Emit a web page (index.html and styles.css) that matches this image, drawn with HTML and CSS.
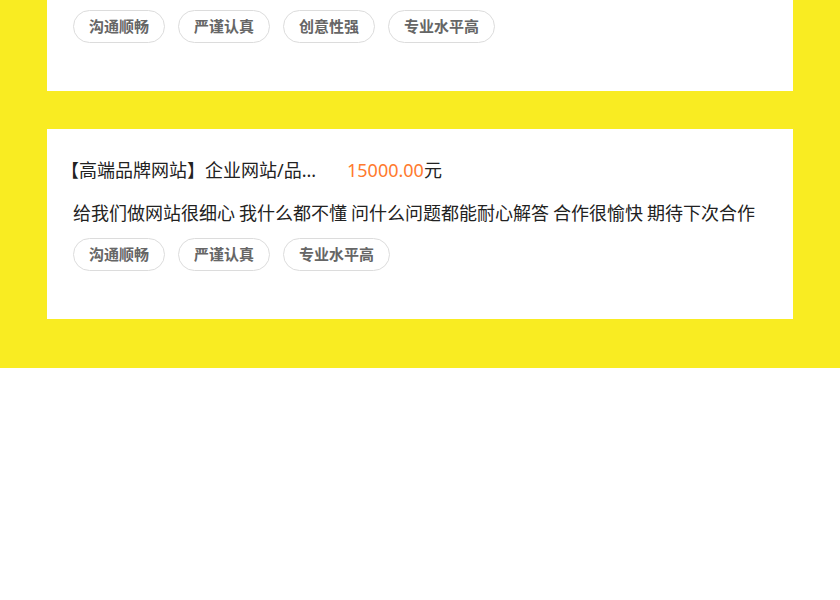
FILE: index.html
```html
<!DOCTYPE html>
<html lang="zh-CN">
<head>
  <meta charset="UTF-8" />
  <meta name="viewport" content="width=device-width, initial-scale=1.0"/>
  <title>客户评价</title>
  <link rel="stylesheet" href="styles.css">
</head>
<body>

  <div class="reviews">
    <div class="card card-cut">
      <div class="tags">
        <span class="tag">沟通顺畅</span>
        <span class="tag">严谨认真</span>
        <span class="tag">创意性强</span>
        <span class="tag">专业水平高</span>
      </div>
    </div>

    <div class="card">
      <div class="card-head">
        <div class="title">【高端品牌网站】企业网站/品...</div>
        <div class="price"><span class="num">15000.00</span>元</div>
      </div>
      <p class="comment">给我们做网站很细心 我什么都不懂 问什么问题都能耐心解答 合作很愉快 期待下次合作</p>
      <div class="tags">
        <span class="tag">沟通顺畅</span>
        <span class="tag">严谨认真</span>
        <span class="tag">专业水平高</span>
      </div>
    </div>
  </div>

</body>
</html>
```

FILE: styles.css
```css
body {
  margin: 0;
  background: #fff;
  font-family: "Noto Sans CJK SC", "Noto Sans", sans-serif;
  color: #222;
}
.reviews {
  background: #f9ec22;
  padding: 0 47px 49px;
  display: flex;
  flex-direction: column;
  gap: 38px;
}
.card {
  background: #fff;
  padding: 29px 20px 48px 26px;
}
.card-cut {
  padding-top: 10px;
}
.card-head {
  display: flex;
  align-items: center;
  height: 24px;
}
.title {
  width: 258px;
  margin-left: -12px;
  font-family: "Noto Sans", "Noto Sans CJK SC", sans-serif;
  font-size: 18px;
  line-height: 24px;
  white-space: nowrap;
}
.price {
  margin-left: 28px;
  font-family: "Noto Sans", "Noto Sans CJK SC", sans-serif;
  font-size: 18px;
  line-height: 24px;
}
.price .num {
  color: #ff7a2e;
}
.comment {
  margin: 18px 0 14px;
  font-size: 18px;
  line-height: 24px;
  color: #222;
}
.tags {
  display: flex;
  gap: 13px;
}
.tag {
  box-sizing: border-box;
  height: 33px;
  border: 1px solid #dcdcdc;
  border-radius: 17px;
  line-height: 29px;
  padding: 0 15px 2px;
  font-size: 15px;
  font-weight: bold;
  color: #666;
}
```
